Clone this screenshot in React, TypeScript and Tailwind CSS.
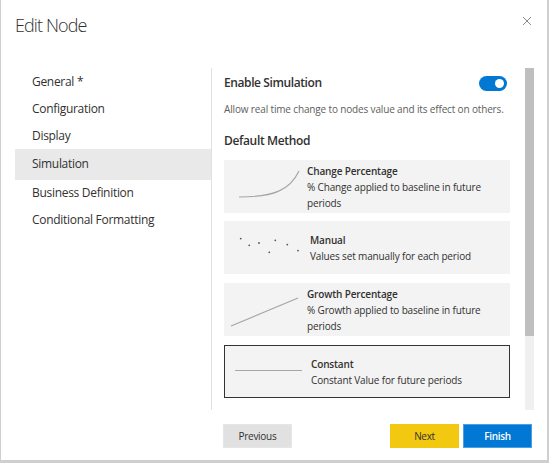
import React from "react";

const font = { fontFamily: '"Open Sans", "Noto Sans", sans-serif' };

function NavItem({ label, active, h }: { label: string; active?: boolean; h: string }) {
  return (
    <div
      className={`flex items-center pl-[17px] text-[12px] tracking-[-0.3px] text-[#323130] ${h} ${active ? "bg-[#e9e9e9]" : ""}`}
    >
      {label}
    </div>
  );
}

function Card({
  icon,
  title,
  desc,
  selected,
  textPl,
  mt,
}: {
  icon: React.ReactNode;
  title: string;
  desc: string;
  selected?: boolean;
  textPl: string;
  mt: string;
}) {
  return (
    <div
      className={`flex h-[53px] w-[286px] items-center bg-[#f3f3f3] ${mt} ${
        selected ? "border border-[#333333]" : ""
      }`}
    >
      <div className="flex h-full w-[78px] shrink-0 items-center">{icon}</div>
      <div className={`flex flex-col text-[10px] leading-[16px] tracking-[-0.15px] text-[#323130] ${textPl} pr-[12px]`}>
        <div className="font-semibold">{title}</div>
        <div>{desc}</div>
      </div>
    </div>
  );
}

export default function App() {
  return (
    <div className="h-[463px] w-[549px] bg-[#cfcfcf] pb-[3px] pl-[1px] pr-[2px]" style={font}>
      <div className="relative flex h-full w-full flex-col bg-white">
        {/* header */}
        <div className="flex h-[68px] items-start justify-between">
          <div className="pl-[14px] pt-[12px] text-[18px] font-light tracking-[-0.9px] text-[#323130]">Edit Node</div>
          <svg className="mr-[15px] mt-[16px]" width="10" height="10" viewBox="0 0 10 10">
            <path d="M1 1 L9 9 M9 1 L1 9" stroke="#8a8886" strokeWidth="1" />
          </svg>
        </div>
        {/* body */}
        <div className="flex h-[342px]">
          <div className="ml-[14px] w-[197px] shrink-0 border-r border-[#e1e1e1]">
            <div className="pt-[0.5px]">
              <NavItem label="General *" h="h-[27px]" />
              <NavItem label="Configuration" h="h-[27px]" />
              <NavItem label="Display" h="h-[26px]" />
              <NavItem label="Simulation" h="h-[31px]" active />
              <NavItem label="Business Definition" h="h-[27px]" />
              <NavItem label="Conditional Formatting" h="h-[27px]" />
            </div>
          </div>
          <div className="flex w-[298px] shrink-0 flex-col overflow-hidden pl-[12px]">
            <div className="flex h-[30px] w-[283px] items-center justify-between">
              <div className="text-[12px] font-semibold tracking-[-0.4px] text-[#323130]">Enable Simulation</div>
              <div className="flex h-[15px] w-[28px] items-center justify-end rounded-full bg-[#0078d4] pr-[3px]">
                <div className="h-[9px] w-[9px] rounded-full bg-white" />
              </div>
            </div>
            <div className="mt-[3px] whitespace-nowrap text-[10px] leading-[16px] tracking-[-0.15px] text-[#605e5c]">
              Allow real time change to nodes value and its effect on others.
            </div>
            <div className="mt-[14px] text-[12px] font-semibold leading-[20px] tracking-[-0.35px] text-[#323130]">
              Default Method
            </div>
            <Card
              mt="mt-[9px]"
              textPl="pl-[5px]"
              title="Change Percentage"
              desc="% Change applied to baseline in future periods"
              icon={
                <svg width="78" height="53" viewBox="0 0 78 53">
                  <path d="M15 37 C 50 37, 66 30, 75 11" stroke="#a6a6a6" strokeWidth="1.2" fill="none" />
                </svg>
              }
            />
            <Card
              mt="mt-[8px]"
              textPl="pl-[8px]"
              title="Manual"
              desc="Values set manually for each period"
              icon={
                <svg width="78" height="53" viewBox="0 0 78 53">
                  {[
                    [16.7, 17.6],
                    [25.3, 24.3],
                    [35, 22],
                    [51.3, 19.3],
                    [63.3, 23.6],
                    [45.3, 31.3],
                    [74, 29.6],
                  ].map(([x, y], i) => (
                    <circle key={i} cx={x} cy={y} r="0.9" fill="#555" />
                  ))}
                </svg>
              }
            />
            <Card
              mt="mt-[9px]"
              textPl="pl-[5px]"
              title="Growth Percentage"
              desc="% Growth applied to baseline in future periods"
              icon={
                <svg width="78" height="53" viewBox="0 0 78 53">
                  <path d="M7 43 L74 15" stroke="#a6a6a6" strokeWidth="1.2" fill="none" />
                </svg>
              }
            />
            <Card
              mt="mt-[9px]"
              selected
              textPl="pl-[8px]"
              title="Constant"
              desc="Constant Value for future periods"
              icon={
                <svg width="77" height="51" viewBox="0 0 77 51">
                  <path d="M10 24.5 L77 24.5" stroke="#a6a6a6" strokeWidth="1.2" fill="none" />
                </svg>
              }
            />
          </div>
          <div className="ml-[15px] flex w-[9px] shrink-0 flex-col bg-[#f0f0f0]">
            <div className="h-[268px] w-full bg-[#bfbfbf]" />
          </div>
        </div>
        {/* footer */}
        <div className="mt-[14px] flex h-[24px] items-center pl-[222px] pr-[15px] text-[10px] tracking-[-0.3px]">
          <button className="h-[24px] w-[69px] border border-[#e6e6e6] bg-[#e1e1e1] text-[#323130]">Previous</button>
          <div className="flex-1" />
          <button className="h-[24px] w-[69px] bg-[#f2c811] text-[#323130]">Next</button>
          <button className="ml-[4px] h-[24px] w-[69px] border border-[#4aa0e6] bg-[#0078d4] font-semibold text-white">
            Finish
          </button>
        </div>
      </div>
    </div>
  );
}
